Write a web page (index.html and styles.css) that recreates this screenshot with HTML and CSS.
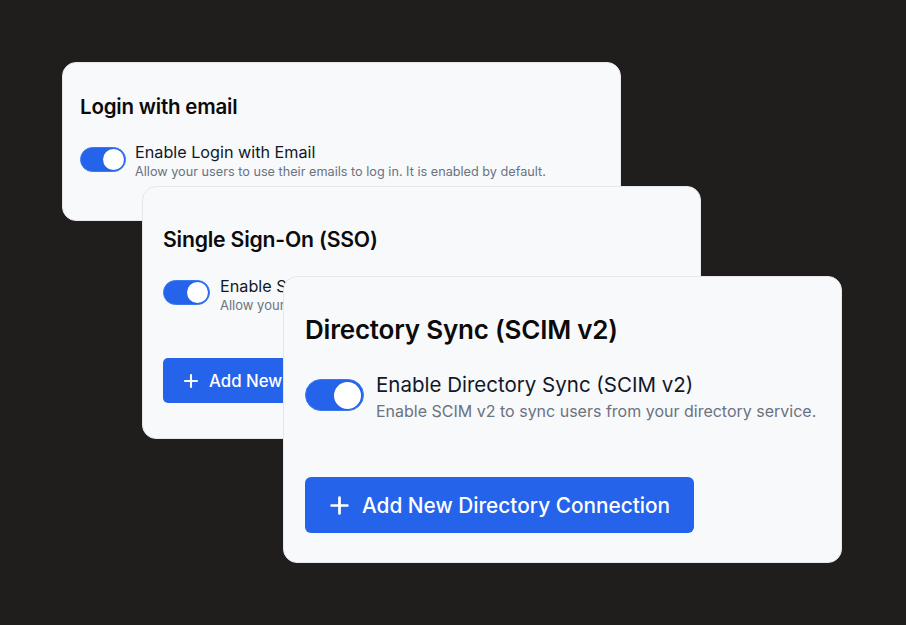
FILE: index.html
```html
<!DOCTYPE html>
<html lang="en">
<head>
<meta charset="utf-8">
<title>Authentication settings</title>
<link rel="stylesheet" href="styles.css">
</head>
<body>
<main class="desk">
  <section class="card card-email">
    <h2 class="card-title">Login with email</h2>
    <div class="setting">
      <span class="toggle"><span class="knob"></span></span>
      <div class="setting-text">
        <div class="setting-label">Enable Login with Email</div>
        <div class="setting-desc">Allow your users to use their emails to log in. It is enabled by default.</div>
      </div>
    </div>
  </section>

  <section class="card card-sso">
    <h2 class="card-title">Single Sign-On (SSO)</h2>
    <div class="setting">
      <span class="toggle"><span class="knob"></span></span>
      <div class="setting-text">
        <div class="setting-label">Enable Single Sign-On (SSO)</div>
        <div class="setting-desc">Allow your users to log in with an SSO provider.</div>
      </div>
    </div>
    <button class="btn" type="button">
      <svg class="plus" viewBox="0 0 20 20" aria-hidden="true"><path d="M10 2.5v15M2.5 10h15"/></svg>
      <span>Add New SSO Connection</span>
    </button>
  </section>

  <section class="card card-scim">
    <h2 class="card-title">Directory Sync (SCIM v2)</h2>
    <div class="setting">
      <span class="toggle"><span class="knob"></span></span>
      <div class="setting-text">
        <div class="setting-label">Enable Directory Sync (SCIM v2)</div>
        <div class="setting-desc">Enable SCIM v2 to sync users from your directory service.</div>
      </div>
    </div>
    <button class="btn" type="button">
      <svg class="plus" viewBox="0 0 20 20" aria-hidden="true"><path d="M10 2.5v15M2.5 10h15"/></svg>
      <span>Add New Directory Connection</span>
    </button>
  </section>
</main>
</body>
</html>
```

FILE: styles.css
```css
* { box-sizing: border-box; }

html, body {
  margin: 0;
  height: 100%;
}

body {
  background: #1f1e1d;
  font-family: Inter, "Noto Sans", "Liberation Sans", sans-serif;
  color: #111827;
}

.desk {
  position: relative;
  width: 906px;
  height: 625px;
  overflow: hidden;
}

/* settings panels stacked like windows */
.card {
  position: absolute;
  width: 559px;
  background: #f8f9fb;
  border: 1px solid #e5e7eb;
  border-radius: 14px;
  display: flex;
  flex-direction: column;
  align-items: flex-start;
}

.card-title {
  margin: 0;
  font-weight: 600;
  color: #0b0b0c;
  letter-spacing: -0.2px;
}

.setting {
  display: flex;
  align-items: flex-start;
}

.setting-text {
  white-space: nowrap;
}

.toggle {
  flex: none;
  display: flex;
  align-items: center;
  justify-content: flex-end;
  background: #2563eb;
  border: 1px solid #3b7bf0;
  border-radius: 999px;
}

.knob {
  display: block;
  background: #ffffff;
  border-radius: 50%;
}

.setting-label {
  color: #111827;
}

.setting-desc {
  color: #6b7280;
}

.btn {
  display: flex;
  align-items: center;
  border: 0;
  background: #2563eb;
  color: #ffffff;
  font-family: inherit;
  font-weight: 500;
  cursor: pointer;
}

.plus {
  flex: none;
  fill: none;
  stroke: #ffffff;
  stroke-linecap: round;
}

/* Login with email */
.card-email {
  left: 62px;
  top: 62px;
  height: 159px;
  padding: 30px 0 0 17px;
}
.card-email .card-title { font-size: 20.5px; line-height: 28px; }
.card-email .setting { margin-top: 21px; gap: 9px; }
.card-email .toggle { width: 46px; height: 25px; margin-top: 5px; padding-right: 1px; }
.card-email .knob { width: 21px; height: 21px; }
.card-email .setting-label { font-size: 16.2px; line-height: 20px; }
.card-email .setting-desc { font-size: 12.7px; line-height: 18px; margin-top: 1px; }

/* Single Sign-On */
.card-sso {
  left: 142px;
  top: 186px;
  height: 253px;
  padding: 38px 0 0 20px;
}
.card-sso .card-title { font-size: 21.2px; line-height: 28px; }
.card-sso .setting { margin-top: 23px; gap: 10px; }
.card-sso .toggle { width: 47px; height: 25px; margin-top: 4px; padding-right: 1px; }
.card-sso .knob { width: 21px; height: 21px; }
.card-sso .setting-label { font-size: 16.2px; line-height: 20px; }
.card-sso .setting-desc { font-size: 13px; line-height: 18px; }
.card-sso .btn {
  margin-top: 44px;
  height: 45px;
  padding: 0 20px;
  gap: 10px;
  border-radius: 5px;
  font-size: 16.8px;
}
.card-sso .plus { width: 16px; height: 16px; stroke-width: 2.6; }

/* Directory Sync */
.card-scim {
  left: 283px;
  top: 276px;
  height: 287px;
  padding: 37px 0 0 21px;
}
.card-scim .card-title { font-size: 26px; line-height: 32px; }
.card-scim .setting { margin-top: 26px; gap: 12px; }
.card-scim .toggle { width: 59px; height: 32px; margin-top: 7px; padding-right: 2px; }
.card-scim .knob { width: 27px; height: 27px; }
.card-scim .setting-label { font-size: 20.5px; line-height: 26px; }
.card-scim .setting-desc { font-size: 16px; line-height: 22px; margin-top: 2px; }
.card-scim .btn {
  margin-top: 55px;
  height: 56px;
  padding: 0 24px;
  gap: 12px;
  border-radius: 6px;
  font-size: 20.8px;
}
.card-scim .plus { width: 21px; height: 21px; stroke-width: 2.6; }
```
